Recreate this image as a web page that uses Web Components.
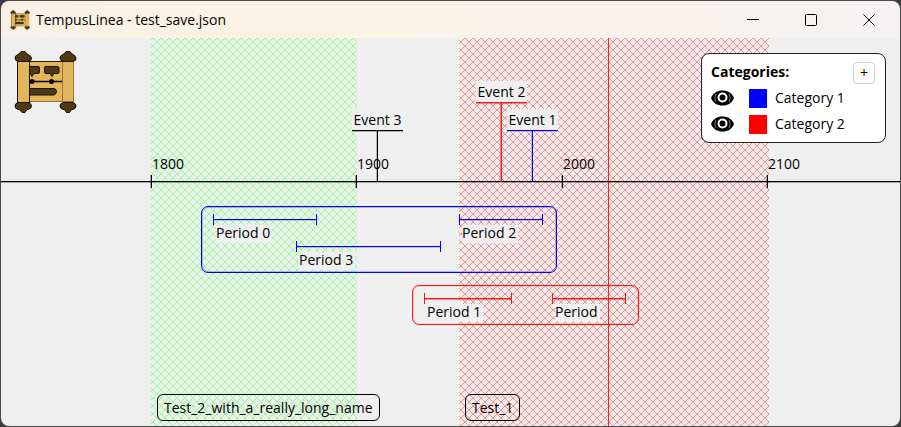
<!DOCTYPE html>
<html lang="en">
<head>
<meta charset="utf-8">
<title>TempusLinea - test_save.json</title>
<style>
html, body { height: 100%; margin: 0; }
body { background: #3c3b3b; font: 14px/20px "Open Sans", "Noto Sans", sans-serif; color: #000; }
</style>
</head>
<body>
<app-window></app-window>

<template id="scroll-logo">
<style>
:host { display: block; }
svg { display: block; width: 100%; height: 100%; }
</style>
<svg viewBox="0 0 64 64" aria-hidden="true">
  <rect x="4" y="12" width="56" height="40" fill="#e3b65c"/>
  <path d="M15 11.500H60" stroke="#2a1f08" fill="none"/>
  <path d="M15 51.500H60" stroke="#96743a" fill="none"/>
  <path d="M49.500 11V52M60.500 11V52" stroke="#96743a" fill="none"/>
  <g fill="#4f3a10" stroke="#15120a" stroke-width="1">
    <path d="M16 16.500H25Q26.500 16.500 26.500 18V22Q26.500 23.500 25 23.500H21L19 26.500L17 23.500H16Z"/>
    <path d="M32.500 16.500H44.500Q46 16.500 46 18V22Q46 23.500 44.500 23.500H41L39 26.500L37 23.500H33Q31.500 23.500 31.500 22V18Q31.500 16.500 32.500 16.500Z"/>
    <path d="M16 38.500H41Q43.500 39 43.500 41.500T41 45H16Z"/>
    <path d="M5 4.500L7 3L8 1.500H12L13 3L15 4.500Q18 5.500 18.500 8T15 11.500H5Q2 10.500 2 8T5 4.500Z"/>
    <path d="M50 4.500L52 3L53 1.500H57L58 3L60 4.500Q62.500 5.500 63 8T60 11.500H50Q47 10.500 47 8T50 4.500Z"/>
    <path d="M5 52.500H15Q18.500 53.500 18.500 56T15 59.500H14L12 62.500H9L6.500 59.500H5Q2 58.500 2 56T5 52.500Z"/>
    <path d="M50 52.500H60Q63 53.500 63 56T60 59.500H58.500L56.500 62.500H53.500L51.500 59.500H50Q47 58.500 47 56T50 52.500Z"/>
  </g>
  <rect x="4.500" y="11.500" width="12" height="41" fill="#e3b65c" stroke="#111"/>
  <path d="M17 31.500H49" stroke="#000" stroke-width="1.500"/>
  <circle cx="19" cy="31.500" r="2.500"/><circle cx="38.500" cy="31.500" r="2.500"/>
</svg>
</template>

<template id="title-bar">
<style>
:host { display: flex; align-items: center; height: 37px; padding-right: 2px; background: linear-gradient(90deg, #f9f1e5, #fbf3e5 40%, #f8f2ec 70%, #f4f2f3); }
scroll-logo { width: 20px; height: 20px; margin: 0 6px 0 9px; }
h1 { flex: 1; margin: 0; font-size: 14px; font-weight: 400; line-height: 20px; }
button { width: 58px; height: 37px; display: grid; place-items: center; padding: 0; border: 0; background: none; }
</style>
<scroll-logo></scroll-logo>
<h1><slot></slot></h1>
<button aria-label="Minimize"><svg width="12" height="12" fill="none" stroke="#000"><path d="M0 5.500H12"/></svg></button>
<button aria-label="Maximize"><svg width="12" height="12" fill="none" stroke="#000"><rect x=".5" y=".5" width="11" height="11" rx="1"/></svg></button>
<button aria-label="Close"><svg width="12" height="12" fill="none" stroke="#000"><path d="M.5 .5L11.500 11.500M11.500 .5L.5 11.500"/></svg></button>
</template>

<template id="time-band">
<style>
:host { position: absolute; top: 0; bottom: 0; display: block; }
svg { display: block; width: 100%; height: 100%; }
span { position: absolute; left: 6px; bottom: 5px; padding: 3px 6px 2px; border: 1px solid #000; border-radius: 6px; white-space: nowrap; }
</style>
<svg shape-rendering="crispEdges" aria-hidden="true">
  <defs><pattern id="hatch" width="8" height="8" patternUnits="userSpaceOnUse">
    <path fill="currentColor" d="M0 0h1v1H0zM7 0h1v1H7zM1 1h1v1H1zM6 1h1v1H6zM2 2h1v1H2zM5 2h1v1H5zM3 3h2v2H3zM2 5h1v1H2zM5 5h1v1H5zM1 6h1v1H1zM6 6h1v1H6zM0 7h1v1H0zM7 7h1v1H7z"/>
  </pattern></defs>
  <rect width="100%" height="100%" fill="url(#hatch)"/>
</svg>
<span><slot></slot></span>
</template>

<template id="year-tick">
<style>
:host { position: absolute; display: block; height: 27px; box-sizing: border-box; padding-left: 1px; }
:host::after { content: ""; position: absolute; left: 0; bottom: -7px; height: 13px; border-left: 1px solid #000; box-shadow: -1px 0 rgba(0, 0, 0, .3); }
</style>
<slot></slot>
</template>

<template id="time-event">
<style>
:host { position: absolute; display: block; width: 51px; }
span { display: block; height: 21px; line-height: 22px; text-align: center; background: #efefef; border-bottom: 1px solid var(--ink); box-shadow: 0 1px var(--soft); white-space: nowrap; }
i { display: block; width: 1px; height: var(--stem); margin-left: 25px; background: var(--ink); box-shadow: -1px 0 var(--soft); }
</style>
<span><slot></slot></span><i></i>
</template>

<template id="time-period">
<style>
:host { position: absolute; display: block; }
i { display: block; height: 11px; box-sizing: border-box; border: solid var(--ink); border-width: 0 1px; background: linear-gradient(var(--ink) 1px, var(--soft) 1px) 0 5px / 100% 2px no-repeat; }
span { display: block; width: max-content; margin-left: 3px; padding-right: 2px; height: 18px; line-height: 16px; background: #efefef; white-space: nowrap; }
</style>
<i></i><span><slot></slot></span>
</template>

<template id="period-group">
<style>
:host { position: absolute; display: block; box-sizing: border-box; border: 1px solid var(--ink); border-radius: 7px; box-shadow: inset 0 0 0 1px var(--edge); }
</style>
<slot></slot>
</template>

<template id="category-row">
<style>
:host { display: flex; align-items: center; height: 26px; }
button { width: 23px; height: 16px; padding: 0; border: 0; background: none; }
button svg { display: block; width: 23px; height: 16px; }
i { width: 18px; height: 19px; margin: 0 8px 0 15px; background: var(--ink); }
</style>
<button aria-label="Toggle visibility"><svg viewBox="0 0 23 16"><path d="M0 8C2 3 6 .5 11.500 .5S21 3 23 8C21 13 17 15.500 11.500 15.500S2 13 0 8Z"/><circle cx="11.500" cy="7.500" r="4" fill="none" stroke="#fff" stroke-width="2"/><path d="M5 4Q2.500 8 5 12M18 4Q20.500 8 18 12" stroke="#fff" fill="none" stroke-width=".5"/></svg></button>
<i></i><span><slot></slot></span>
</template>

<template id="category-panel">
<style>
:host { display: block; box-sizing: border-box; width: 185px; padding: 8px 10px 5px 9px; background: #fff; border: 1px solid #222; border-radius: 8px; }
header { display: flex; justify-content: space-between; height: 22px; }
h2 { margin: 0; font-size: 14px; line-height: 20px; }
header button { width: 22px; height: 22px; padding: 0; border: 1px solid #d0d0d0; border-radius: 4px; background: #fdfdfd; font: 14px/20px "Open Sans", sans-serif; color: #000; }
section { padding-top: 1px; }
</style>
<header><h2>Categories:</h2><button aria-label="Add category">+</button></header>
<section><slot></slot></section>
</template>

<template id="timeline-view">
<style>
:host { display: block; position: relative; overflow: hidden; background: #efefef; }
.logo { position: absolute; left: 12px; top: 12px; width: 64px; height: 64px; }
.axis { position: absolute; left: 0; right: 0; top: 143px; height: 1px; background: #000; box-shadow: 0 1px rgba(0, 0, 0, .3); }
.now { position: absolute; left: 607px; top: 0; bottom: 0; width: 1px; background: #ff2020; }
category-panel { position: absolute; right: 14px; top: 15px; }
.blue { --ink: #0000ff; --soft: rgba(0, 0, 255, .2); --edge: rgba(0, 0, 255, .25); }
.red { --ink: #ff1414; --soft: rgba(255, 0, 0, .4); --edge: rgba(255, 0, 0, .1); }
category-row.red { --ink: #ff0000; }
.black { --ink: #000; --soft: rgba(0, 0, 0, .25); }
</style>
<time-band x="150" w="206" tint="#8cff8c">Test_2_with_a_really_long_name</time-band>
<time-band x="458" w="310" tint="#fa8c8c">Test_1</time-band>
<scroll-logo class="logo"></scroll-logo>
<div class="now"></div>
<div class="axis"></div>
<year-tick x="150" y="116">1800</year-tick>
<year-tick x="355" y="116">1900</year-tick>
<year-tick x="561" y="116">2000</year-tick>
<year-tick x="766" y="116">2100</year-tick>
<time-event class="black" x="351" y="71" stem="51">Event 3</time-event>
<time-event class="red" x="475" y="43" stem="79">Event 2</time-event>
<time-event class="blue" x="506" y="71" stem="51">Event 1</time-event>
<period-group class="blue" x="200" y="168" w="356" h="67">
  <time-period x="11" y="7" w="104">Period 0</time-period>
  <time-period x="94" y="34" w="145">Period 3</time-period>
  <time-period x="257" y="7" w="84">Period 2</time-period>
</period-group>
<period-group class="red" x="411" y="247" w="227" h="40">
  <time-period x="11" y="7" w="88">Period 1</time-period>
  <time-period x="139" y="7" w="74">Period</time-period>
</period-group>
<category-panel>
  <category-row class="blue">Category 1</category-row>
  <category-row class="red">Category 2</category-row>
</category-panel>
</template>

<template id="app-window">
<style>
:host { display: flex; flex-direction: column; box-sizing: border-box; height: 100vh; border: 1px solid #4b494a; border-radius: 9px; overflow: hidden; }
timeline-view { flex: 1; }
</style>
<title-bar>TempusLinea - test_save.json</title-bar>
<timeline-view></timeline-view>
</template>

<script>
class Part extends HTMLElement {
  constructor() {
    super();
    this.attachShadow({ mode: "open" })
      .append(document.getElementById(this.localName).content.cloneNode(true));
  }
}
class Placed extends Part {
  connectedCallback() {
    for (const [name, prop] of [["x", "left"], ["y", "top"], ["w", "width"], ["h", "height"]])
      if (this.hasAttribute(name)) this.style[prop] = this.getAttribute(name) + "px";
  }
}
class TimeBand extends Placed {
  connectedCallback() {
    super.connectedCallback();
    const root = this.shadowRoot;
    root.querySelector("svg").style.color = this.getAttribute("tint");
    /* keeps the hatch of every band on one shared grid */
    root.querySelector("pattern").setAttribute("x", -(this.getAttribute("x") % 8));
  }
}
class TimeEvent extends Placed {
  connectedCallback() {
    super.connectedCallback();
    this.style.setProperty("--stem", this.getAttribute("stem") + "px");
  }
}
customElements.define("scroll-logo", class extends Part {});
customElements.define("title-bar", class extends Part {});
customElements.define("time-band", TimeBand);
customElements.define("year-tick", class extends Placed {});
customElements.define("time-event", TimeEvent);
customElements.define("time-period", class extends Placed {});
customElements.define("period-group", class extends Placed {});
customElements.define("category-row", class extends Part {});
customElements.define("category-panel", class extends Part {});
customElements.define("timeline-view", class extends Part {});
customElements.define("app-window", class extends Part {});
</script>
</body>
</html>
